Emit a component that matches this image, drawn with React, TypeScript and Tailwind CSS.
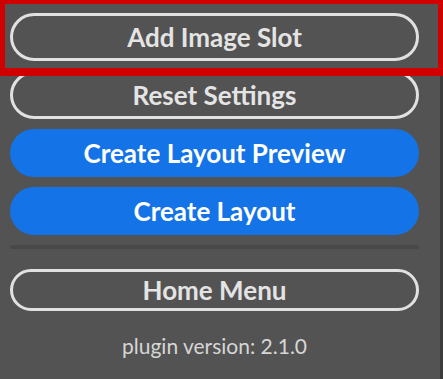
const outline =
  "flex items-center justify-center rounded-full border-[3px] border-[#e1e1e1] text-[#e4e4e4] font-bold";
const filled =
  "flex h-[48px] items-center justify-center rounded-full bg-[#1473e6] text-white font-bold";

export default function App() {
  return (
    <div
      className="relative flex h-[379px] w-[443px] bg-[#535353]"
      style={{ fontFamily: "Lato, 'Open Sans', sans-serif" }}
    >
      <div className="flex w-[409px] flex-col pt-[13px] ml-[10px]">
        <div className="flex flex-col gap-[10px]">
          <button className={`${outline} h-[48px] text-[26px]`}>Add Image Slot</button>
          <button className={`${outline} h-[48px] text-[26px]`}>Reset Settings</button>
          <button className={`${filled} text-[26px]`}>Create Layout Preview</button>
          <button className={`${filled} text-[26px]`}>Create Layout</button>
        </div>
        <div className="mt-[10px] h-[4px] rounded-full bg-[#484848]" />
        <button className={`${outline} mt-[20px] h-[42px] text-[26px]`}>Home Menu</button>
        <p className="mt-[19px] text-center text-[21px] text-[#d6d6d6]">plugin version: 2.1.0</p>
      </div>
      <div className="ml-auto w-[3px] bg-[#3c3c3c]" />

      {/* selection frame */}
      <div className="pointer-events-none absolute left-0 top-0 h-[76px] w-[443px] border-t-4 border-x-[5px] border-b-8 border-[#d10000]" />
    </div>
  );
}
